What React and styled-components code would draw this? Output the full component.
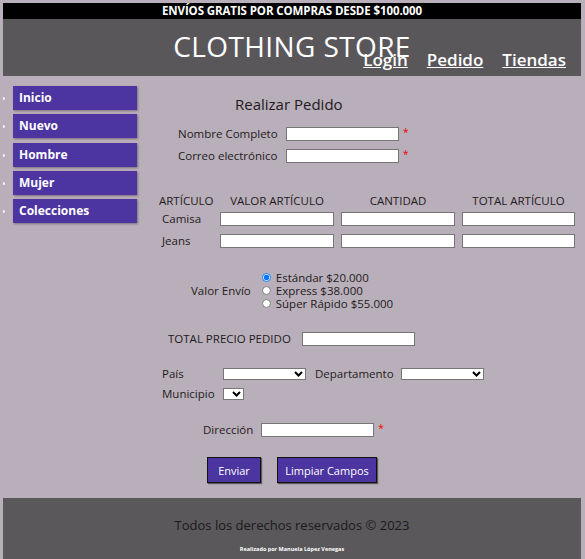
import React from 'react';
import styled, { createGlobalStyle } from 'styled-components';

const GlobalStyle = createGlobalStyle`
body {
    margin: 3px 4px 0 3px;
    background: #b9afba;
    font-family: "Open Sans", "Liberation Sans", sans-serif;
    color: #1f1b20;
}
`;

const menu = ['Inicio', 'Nuevo', 'Hombre', 'Mujer', 'Colecciones'];
const articles = ['Camisa', 'Jeans'];
const shipping = [
    { label: 'Estándar $20.000', checked: true },
    { label: 'Express $38.000' },
    { label: 'Súper Rápido $55.000' },
];

function Chevron() {
    return (
        <svg width="9" height="6" viewBox="0 0 9 6">
            <path d="M1 1 L4.5 4.5 L8 1" fill="none" stroke="#000" strokeWidth="2" />
        </svg>
    );
}

function Dropdown({ width }) {
    return (
        <SelectWrap>
            <Select style={{ width }} defaultValue="">
                <option value=""></option>
            </Select>
            <ChevronBox><Chevron /></ChevronBox>
        </SelectWrap>
    );
}

export default function App() {
    return (
        <>
            <GlobalStyle />
            <Banner>ENVÍOS GRATIS POR COMPRAS DESDE $100.000</Banner>
            <Header>
                <Title>CLOTHING STORE</Title>
                <TopNav>
                    <a href="#">Login</a>
                    <a href="#">Pedido</a>
                    <a href="#">Tiendas</a>
                </TopNav>
            </Header>
            <Content>
                <Menu>
                    {menu.map((m) => (
                        <li key={m}><a href="#">{m}</a></li>
                    ))}
                </Menu>
                <Form onSubmit={(e) => e.preventDefault()}>
                    <FormTitle>Realizar Pedido</FormTitle>

                    <Row indent={41} gap={8} top={14}>
                        <Label width={100}>Nombre Completo</Label>
                        <Input />
                        <Required>*</Required>
                    </Row>
                    <Row indent={41} gap={8} top={8}>
                        <Label width={100}>Correo electrónico</Label>
                        <Input />
                        <Required>*</Required>
                    </Row>

                    <Table>
                        <Th>ARTÍCULO</Th>
                        <Th>VALOR ARTÍCULO</Th>
                        <Th>CANTIDAD</Th>
                        <Th>TOTAL ARTÍCULO</Th>
                        {articles.map((a) => (
                            <React.Fragment key={a}>
                                <Td>{a}</Td>
                                <Input width={114} />
                                <Input width={114} />
                                <Input width={113} />
                            </React.Fragment>
                        ))}
                    </Table>

                    <Row indent={54} gap={11} top={23}>
                        <Label>Valor Envío</Label>
                        <Radios>
                            {shipping.map((s) => (
                                <RadioLine key={s.label}>
                                    <Radio type="radio" name="envio" defaultChecked={s.checked} />
                                    {s.label}
                                </RadioLine>
                            ))}
                        </Radios>
                    </Row>

                    <Row indent={31} gap={11} top={22}>
                        <Label>TOTAL PRECIO PEDIDO</Label>
                        <Input />
                    </Row>

                    <Row indent={25} gap={0} top={21}>
                        <Label width={61}>País</Label>
                        <Dropdown width={83} />
                        <Label pad={9} width={86}>Departamento</Label>
                        <Dropdown width={83} />
                    </Row>
                    <Row indent={25} gap={0} top={6}>
                        <Label width={61}>Municipio</Label>
                        <Dropdown width={21} />
                    </Row>

                    <Row indent={66} gap={8} top={22}>
                        <Label>Dirección</Label>
                        <Input />
                        <Required>*</Required>
                    </Row>

                    <Row indent={70} gap={16} top={20}>
                        <Button type="submit" width={54}>Enviar</Button>
                        <Button type="reset" width={100}>Limpiar Campos</Button>
                    </Row>
                </Form>
            </Content>
            <Footer>
                <p>Todos los derechos reservados © 2023</p>
                <small>Realizado por Manuela López Venegas</small>
            </Footer>
        </>
    );
}

const Banner = styled.div`
background: #000;
color: #fff;
height: 16px;
line-height: 16px;
text-align: center;
font-size: 11.5px;
font-weight: 700;
letter-spacing: -0.1px;
`;

const Header = styled.header`
position: relative;
background: #5a575b;
height: 57px;
`;

const Title = styled.h1`
margin: 0;
padding-top: 9px;
text-align: center;
color: #fff;
font-size: 28px;
font-weight: 500;
line-height: 36px;
letter-spacing: 0.4px;
`;

const TopNav = styled.nav`
position: absolute;
right: 15px;
bottom: 5px;
display: flex;
gap: 19px;
a {
    color: #fff;
    font-size: 17px;
    font-weight: 600;
    line-height: 22px;
    text-decoration: underline;
}
`;

const Content = styled.div`
display: flex;
align-items: flex-start;
`;

const Menu = styled.ul`
width: 124px;
margin: 10px 0 0;
padding: 0 0 0 10px;
list-style: none;
li {
    position: relative;
    margin-bottom: 4.25px;
}
li::before {
    content: '';
    position: absolute;
    left: -11px;
    top: 11px;
    width: 3px;
    height: 3px;
    border-radius: 50%;
    background: #f4f4f4;
}
a {
    display: block;
    height: 24px;
    line-height: 23px;
    padding-left: 6px;
    background: #4c34a1;
    color: #fff;
    font-size: 12px;
    font-weight: 700;
    text-decoration: none;
    box-shadow: 1px 1px 2px rgba(0, 0, 0, 0.35);
}
`;

const Form = styled.form`
display: flex;
flex-direction: column;
padding-top: 19px;
font-size: 11.5px;
`;

const FormTitle = styled.h2`
margin: 0 0 0 98px;
font-size: 15px;
font-weight: 500;
line-height: 18px;
`;

const Row = styled.div`
display: flex;
align-items: center;
gap: ${(p) => p.gap}px;
margin: ${(p) => p.top}px 0 0 ${(p) => p.indent}px;
`;

const Label = styled.label`
display: inline-block;
width: ${(p) => (p.width ? `${p.width}px` : 'auto')};
padding-left: ${(p) => p.pad || 0}px;
line-height: 14px;
white-space: nowrap;
`;

const Input = styled.input`
box-sizing: border-box;
width: ${(p) => p.width || 113}px;
height: 14px;
margin: 0;
padding: 0 2px;
border: 1px solid #767676;
background: #fff;
`;

const Required = styled.span`
color: #e00;
font-size: 10px;
align-self: flex-start;
margin-left: -4px;
line-height: 10px;
`;

const Table = styled.div`
display: grid;
grid-template-columns: 54px 114px 114px 113px;
column-gap: 7px;
row-gap: 8px;
margin: 31px 0 0 22px;
align-items: center;
`;

const Th = styled.div`
text-align: center;
font-size: 11.5px;
line-height: 14px;
white-space: nowrap;
margin-bottom: -4px;
`;

const Td = styled.div`
padding-left: 3px;
line-height: 14px;
`;

const Radios = styled.div`
display: flex;
flex-direction: column;
`;

const RadioLine = styled.label`
display: flex;
align-items: center;
gap: 5px;
height: 13px;
line-height: 13px;
`;

const Radio = styled.input`
width: 9px;
height: 9px;
margin: 0;
`;

const SelectWrap = styled.span`
position: relative;
display: inline-flex;
`;

const Select = styled.select`
box-sizing: border-box;
height: 12px;
margin: 0;
padding: 0;
border: 1px solid #767676;
border-radius: 0;
background: #fff;
appearance: none;
`;

const ChevronBox = styled.span`
position: absolute;
right: 3px;
top: 3px;
display: flex;
pointer-events: none;
`;

const Button = styled.button`
box-sizing: border-box;
width: ${(p) => p.width}px;
height: 26px;
padding: 0;
border: 1px solid #111;
background: #4c34a1;
color: #fff;
font-family: inherit;
font-size: 11px;
box-shadow: 1px 1px 1px rgba(0, 0, 0, 0.5);
`;

const Footer = styled.footer`
margin-top: 15px;
background: #5a585b;
padding: 18px 0 20px;
text-align: center;
p {
    margin: 0;
    font-size: 13px;
    line-height: 18px;
    color: #1c1a1d;
}
small {
    display: block;
    margin-top: 11px;
    font-size: 5.5px;
    font-weight: 700;
    color: #fff;
}
`;
